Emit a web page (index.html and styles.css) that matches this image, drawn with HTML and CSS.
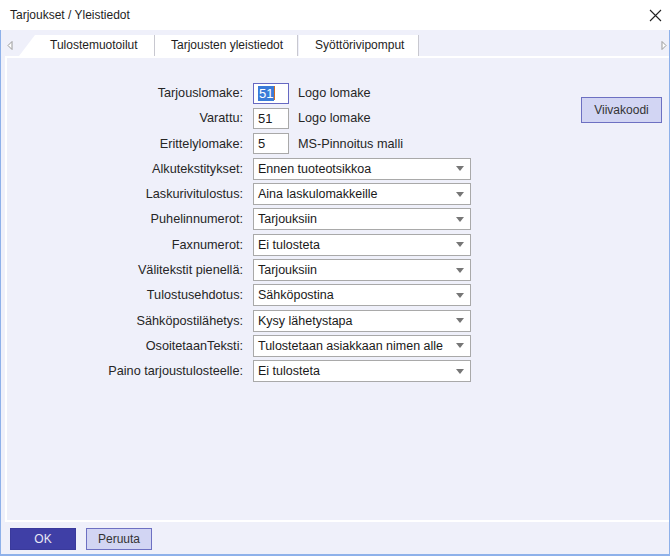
FILE: index.html
```html
<!DOCTYPE html>
<html lang="fi">
<head>
<meta charset="utf-8">
<title>Tarjoukset / Yleistiedot</title>
<link rel="stylesheet" href="styles.css">
</head>
<body>
<div class="window">
  <div class="titlebar">
    <span class="title">Tarjoukset / Yleistiedot</span>
    <svg class="close" width="13" height="13" viewBox="0 0 13 13"><path d="M1 1 L12 12 M12 1 L1 12" stroke="#222" stroke-width="1.1" fill="none"/></svg>
  </div>
  <div class="frame">
    <div class="tabstrip">
      <svg class="arrow" width="6" height="9" viewBox="0 0 6 9"><path d="M5 0.5 L1 4.5 L5 8.5 Z" fill="#fff" stroke="#999"/></svg>
      <div class="tab active">Tulostemuotoilut</div>
      <div class="tab">Tarjousten yleistiedot</div>
      <div class="tab">Syöttörivipomput</div>
      <div class="spacer"></div>
      <svg class="arrow" width="6" height="9" viewBox="0 0 6 9"><path d="M1 0.5 L5 4.5 L1 8.5 Z" fill="#fff" stroke="#999"/></svg>
    </div>
    <div class="panel">
      <div class="form">
        <label>Tarjouslomake:</label>
        <div class="field"><span class="input small focused"><span class="sel">51</span><span class="caret"></span></span><span class="note">Logo lomake</span></div>
        <label>Varattu:</label>
        <div class="field"><span class="input small">51</span><span class="note">Logo lomake</span></div>
        <label>Erittelylomake:</label>
        <div class="field"><span class="input small">5</span><span class="note">MS-Pinnoitus malli</span></div>
        <label>Alkutekstitykset:</label>
        <div class="select"><span>Ennen tuoteotsikkoa</span><i></i></div>
        <label>Laskurivitulostus:</label>
        <div class="select"><span>Aina laskulomakkeille</span><i></i></div>
        <label>Puhelinnumerot:</label>
        <div class="select"><span>Tarjouksiin</span><i></i></div>
        <label>Faxnumerot:</label>
        <div class="select"><span>Ei tulosteta</span><i></i></div>
        <label>Välitekstit pienellä:</label>
        <div class="select"><span>Tarjouksiin</span><i></i></div>
        <label>Tulostusehdotus:</label>
        <div class="select"><span>Sähköpostina</span><i></i></div>
        <label>Sähköpostilähetys:</label>
        <div class="select"><span>Kysy lähetystapa</span><i></i></div>
        <label>OsoitetaanTeksti:</label>
        <div class="select"><span>Tulostetaan asiakkaan nimen alle</span><i></i></div>
        <label>Paino tarjoustulosteelle:</label>
        <div class="select"><span>Ei tulosteta</span><i></i></div>
      </div>
      <div class="side">
        <button class="btn light wide">Viivakoodi</button>
      </div>
    </div>
    <div class="footer">
      <button class="btn dark">OK</button>
      <button class="btn light">Peruuta</button>
    </div>
  </div>
</div>
</body>
</html>
```
FILE: styles.css
```css
* { box-sizing: border-box; }
html, body { margin: 0; padding: 0; background: #fff; }
body {
  font-family: "Liberation Sans", Arial, sans-serif;
  font-size: 12px;
  color: #262626;
}
.window {
  width: 670px;
  height: 556px;
  display: flex;
  flex-direction: column;
  background: #fff;
}
.titlebar {
  height: 30px;
  flex: none;
  display: flex;
  align-items: center;
  padding: 0 8px 0 10px;
  background: #fff;
}
.title { flex: 1; font-size: 12px; color: #1e1e1e; }
.close { display: block; }
.frame {
  flex: 1;
  display: flex;
  flex-direction: column;
  background: #eff0fa;
  border-left: 1px solid #8eb1ea;
  border-right: 1px solid #8eb1ea;
  border-bottom: 2px solid #8eb1ea;
}
.tabstrip {
  height: 26px;
  flex: none;
  display: flex;
  align-items: flex-end;
  padding-left: 6px;
  padding-right: 2px;
}
.tabstrip .arrow { align-self: center; margin-top: 4px; }
.tabstrip .arrow:first-child { margin-right: 6px; }
.spacer { flex: 1; }
.tab {
  height: 21px;
  line-height: 20px;
  background: #fff;
  color: #1e1e1e;
  font-size: 12px;
  padding: 0 14px 0 16px;
  border-right: 1px solid #c8c8d0;
  margin-right: 1px;
}
.tab.active {
  width: 136px;
  padding-left: 31px;
  margin-right: 0;
  clip-path: polygon(16px 0, 100% 0, 100% 100%, 0 100%);
}
.panel {
  flex: 1;
  display: flex;
  align-items: flex-start;
  margin-left: 4px;
  border-top: 2px solid #fff;
  border-left: 2px solid #fff;
  border-bottom: 2px solid #fff;
  background: #eff0fa;
}
.form {
  display: grid;
  grid-template-columns: 236px 218px;
  grid-auto-rows: 22px;
  column-gap: 10px;
  row-gap: 3.3px;
  padding-top: 24px;
  align-items: center;
}
.form label {
  text-align: right;
  color: #262626;
  font-size: 12.7px;
  white-space: nowrap;
}
.field { display: flex; align-items: center; }
.input {
  height: 21px;
  width: 36px;
  background: #fff;
  border: 1.5px solid #a9a9a9;
  display: flex;
  align-items: center;
  padding-left: 4px;
  font-size: 13px;
  color: #1a1a1a;
}
.input.focused { border-color: #6669c2; }
.sel { background: #3a7bd8; color: #fff; padding: 0 1px; line-height: 15px; }
.caret { width: 1px; height: 14px; background: #d06a20; }
.note { margin-left: 9px; color: #262626; font-size: 12.7px; }
.select {
  height: 22px;
  background: #fff;
  border: 1.5px solid #a9a9a9;
  display: flex;
  align-items: center;
  padding-left: 4px;
  padding-right: 6px;
  font-size: 12.5px;
  color: #1a1a1a;
}
.select span { flex: 1; white-space: nowrap; }
.select i {
  width: 0; height: 0;
  border-left: 4.5px solid transparent;
  border-right: 4.5px solid transparent;
  border-top: 5px solid #767676;
}
.side {
  margin-left: auto;
  margin-right: 7px;
  padding-top: 39px;
}
.btn {
  font-family: "Liberation Sans", Arial, sans-serif;
  font-size: 12px;
  height: 22px;
  width: 66px;
  padding: 0;
  cursor: default;
}
.btn.light {
  background: #d2d5f3;
  border: 1.5px solid #6d70c2;
  color: #333;
}
.btn.dark {
  background: #3f3fa6;
  border: 1.5px solid #3a3a9c;
  color: #e8e8f4;
}
.btn.wide { width: 81px; height: 26px; }
.footer {
  height: 32px;
  flex: none;
  display: flex;
  gap: 10px;
  padding-left: 9px;
  padding-top: 6px;
}
```
